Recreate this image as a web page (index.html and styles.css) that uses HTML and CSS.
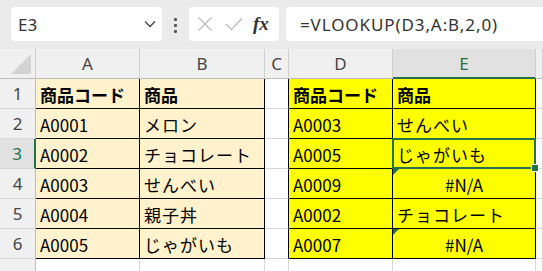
FILE: index.html
```html
<!DOCTYPE html>
<html lang="ja">
<head>
    <meta charset="UTF-8">
    <title>VLOOKUP</title>
    <link rel="stylesheet" href="styles.css">
</head>
<body>
    <div class="formula-bar">
        <div class="name-box">
            <span>E3</span>
            <svg class="chevron" width="12" height="8" viewBox="0 0 12 8"><path d="M1 1.5 L6 6.5 L11 1.5" fill="none" stroke="#444" stroke-width="1.3"/></svg>
        </div>
        <div class="dots"><i></i><i></i><i></i></div>
        <div class="fn-box">
            <svg width="16" height="16" viewBox="0 0 16 16"><path d="M1.5 1.5 L14.5 14.5 M14.5 1.5 L1.5 14.5" stroke="#b8b8b8" stroke-width="1.2"/></svg>
            <svg width="18" height="14" viewBox="0 0 18 14"><path d="M1 7 L6.5 12.5 L17 1.5" fill="none" stroke="#b8b8b8" stroke-width="1.2"/></svg>
            <span class="fx">fx</span>
        </div>
        <div class="formula">=VLOOKUP(D3,A:B,2,0)</div>
    </div>

    <div class="sheet">
        <div class="hd corner"><span class="tri"></span></div>
        <div class="hd">A</div>
        <div class="hd">B</div>
        <div class="hd">C</div>
        <div class="hd">D</div>
        <div class="hd sel-col">E</div>
        <div class="hd last"></div>

        <div class="rh">1</div>
        <div class="c t1 bold">商品コード</div>
        <div class="c t1 bold">商品</div>
        <div class="c gap"></div>
        <div class="c t2 bold">商品コード</div>
        <div class="c t2 bold">商品</div>
        <div class="c"></div>

        <div class="rh">2</div>
        <div class="c t1">A0001</div>
        <div class="c t1 kana">メロン</div>
        <div class="c gap"></div>
        <div class="c t2">A0003</div>
        <div class="c t2 kana">せんべい</div>
        <div class="c"></div>

        <div class="rh sel-row">3</div>
        <div class="c t1">A0002</div>
        <div class="c t1 kana">チョコレート</div>
        <div class="c gap"></div>
        <div class="c t2">A0005</div>
        <div class="c t2 kana active">じゃがいも<span class="handle"></span></div>
        <div class="c"></div>

        <div class="rh">4</div>
        <div class="c t1">A0003</div>
        <div class="c t1 kana">せんべい</div>
        <div class="c gap"></div>
        <div class="c t2">A0009</div>
        <div class="c t2 center flag">#N/A</div>
        <div class="c"></div>

        <div class="rh">5</div>
        <div class="c t1">A0004</div>
        <div class="c t1 kana">親子丼</div>
        <div class="c gap"></div>
        <div class="c t2">A0002</div>
        <div class="c t2 kana">チョコレート</div>
        <div class="c"></div>

        <div class="rh">6</div>
        <div class="c t1 bottom">A0005</div>
        <div class="c t1 bottom kana">じゃがいも</div>
        <div class="c gap"></div>
        <div class="c t2 bottom">A0007</div>
        <div class="c t2 bottom center flag">#N/A</div>
        <div class="c"></div>

        <div class="rh row7">7</div>
        <div class="c"></div>
        <div class="c"></div>
        <div class="c"></div>
        <div class="c"></div>
        <div class="c"></div>
        <div class="c"></div>
    </div>
</body>
</html>
```

FILE: styles.css
```css
body, html {
    margin: 0;
    padding: 0;
    background-color: #ffffff;
    overflow: hidden;
}

body {
    font-family: "Noto Sans CJK JP", "Noto Sans", sans-serif;
    color: #000;
}

.formula-bar {
    height: 49px;
    box-sizing: border-box;
    background-color: #ebebeb;
    display: flex;
    align-items: flex-start;
    padding: 7px 0 0 11px;
    white-space: nowrap;
}

.name-box {
    width: 151px;
    height: 34px;
    box-sizing: border-box;
    background-color: #fff;
    border-radius: 4px;
    display: flex;
    align-items: center;
    justify-content: space-between;
    padding: 0 6px 0 7px;
    font-family: "Noto Sans", sans-serif;
    font-size: 17px;
    color: #333;
}

.dots {
    width: 27px;
    display: flex;
    flex-direction: column;
    align-items: center;
    gap: 3px;
    padding-top: 11px;
}

.dots i {
    width: 3px;
    height: 3px;
    background-color: #555;
    border-radius: 1px;
}

.fn-box {
    width: 90px;
    height: 34px;
    box-sizing: border-box;
    background-color: #fff;
    border-radius: 4px;
    display: flex;
    align-items: center;
    gap: 12px;
    padding-left: 8px;
}

.fx {
    font-family: "Liberation Serif", serif;
    font-style: italic;
    font-weight: bold;
    font-size: 19px;
    color: #333;
    margin-left: -2px;
}

.formula {
    flex: 1;
    height: 34px;
    margin-left: 7px;
    margin-right: -10px;
    background-color: #fff;
    border-radius: 4px;
    display: flex;
    align-items: center;
    padding-left: 14px;
    font-family: "Noto Sans", sans-serif;
    font-size: 17px;
    letter-spacing: 0.9px;
    color: #333;
}

.sheet {
    display: grid;
    grid-template-columns: 36px 104px 125px 24px 104px 143px 7px;
    grid-template-rows: 30px repeat(7, 30px);
}

.hd, .rh, .c {
    box-sizing: border-box;
    border-right: 1px solid #d6d6d6;
    border-bottom: 1px solid #d6d6d6;
    display: flex;
    align-items: center;
}

.hd {
    background-color: #f0f0f0;
    justify-content: center;
    font-family: "Noto Sans", sans-serif;
    font-size: 17px;
    color: #444;
    border-right-color: #d0d0d0;
    border-bottom-color: #bdbdbd;
}

.corner {
    position: relative;
}

.tri {
    position: absolute;
    right: 4px;
    bottom: 4px;
    width: 0;
    height: 0;
    border-left: 20px solid transparent;
    border-bottom: 20px solid #d3d3d3;
}

.sel-col {
    background-color: #e1e1e1;
    color: #217346;
    border-bottom: 2px solid #217346;
}

.rh {
    background-color: #f0f0f0;
    justify-content: center;
    font-family: "Noto Sans", sans-serif;
    font-size: 17px;
    color: #444;
    border-right-color: #bdbdbd;
    border-bottom-color: #d6d6d6;
}

.row7 {
    align-items: flex-start;
    line-height: 1;
    padding-top: 10px;
}

.sel-row {
    background-color: #e1e1e1;
    color: #217346;
    border-right: 2px solid #217346;
}

.c {
    font-size: 17px;
    padding-left: 4px;
    padding-top: 1px;
    white-space: nowrap;
}

.kana {
    letter-spacing: 1px;
}

.bold {
    font-weight: bold;
}

.t1 {
    background-color: #fff2cc;
    border-right-color: #000;
    border-bottom-color: #000;
}

.t2 {
    background-color: #ffff00;
    border-right-color: #000;
    border-bottom-color: #000;
}

.gap {
    border-right-color: #000;
}

.center {
    justify-content: center;
    padding-left: 0;
}

.flag {
    position: relative;
}

.flag::before {
    content: "";
    position: absolute;
    left: 0;
    top: 0;
    border-top: 6px solid #217346;
    border-right: 6px solid transparent;
}

.active {
    position: relative;
}

.active::after {
    content: "";
    position: absolute;
    left: -1px;
    top: -1px;
    right: -1px;
    bottom: -1px;
    border: 2px solid #217346;
}

.handle {
    position: absolute;
    right: -4px;
    bottom: -4px;
    width: 6px;
    height: 6px;
    background-color: #217346;
    border: 1px solid #fff;
    z-index: 2;
}
```
